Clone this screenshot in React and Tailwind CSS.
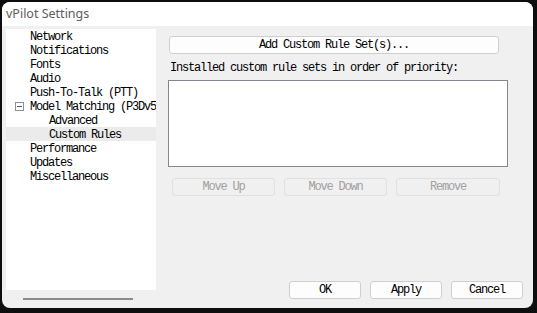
import React from "react";

const mono = { fontFamily: '"Liberation Mono", "DejaVu Sans Mono", monospace' };

const TreeRow = ({ label, depth = 0, selected, expander }) => (
  <div
    className={`h-[14px] flex items-center whitespace-nowrap ${selected ? "bg-[#ebebeb]" : ""}`}
  >
    <div className="w-[24px] flex justify-center shrink-0 pl-[2px]">
      {expander && (
        <div className="w-[9px] h-[9px] border border-[#919191] bg-white flex items-center justify-center">
          <div className="w-[5px] h-px bg-[#3b5f9a]" />
        </div>
      )}
    </div>
    <span className={`pt-px ${depth ? "ml-[19px]" : ""}`}>{label}</span>
  </div>
);

const Btn = ({ children, disabled, className = "" }) => (
  <div
    className={`h-[18px] rounded-[3px] border flex items-center justify-center ${
      disabled
        ? "border-[#e0e0e0] bg-[#f0f0f0] text-[#a0a0a0]"
        : "border-[#cfcfcf] bg-[#fdfdfd] text-black"
    } ${className}`}
  >
    {children}
  </div>
);

export default function App() {
  const items = [
    { label: "Network" },
    { label: "Notifications" },
    { label: "Fonts" },
    { label: "Audio" },
    { label: "Push-To-Talk (PTT)" },
    { label: "Model Matching (P3Dv5)", expander: true },
    { label: "Advanced", depth: 1 },
    { label: "Custom Rules", depth: 1, selected: true },
    { label: "Performance" },
    { label: "Updates" },
    { label: "Miscellaneous" },
  ];

  return (
    <div className="w-[537px] h-[313px] bg-[#0e0e0e] pt-[2px] pl-[2px] overflow-hidden">
      <div className="w-[531px] h-[306px] rounded-lg bg-[#f0f0f0] overflow-hidden flex flex-col">
        {/* Title bar */}
        <div
          className="h-[24px] bg-white flex items-center pl-[4px] text-[12.5px] text-[#5c5c5c]"
          style={{ fontFamily: '"Segoe UI", "Noto Sans", sans-serif' }}
        >
          vPilot Settings
        </div>

        {/* Body */}
        <div className="flex-1 flex pl-[4px] pt-[3px] text-[12px] tracking-[-1.2px]" style={mono}>
          {/* Tree */}
          <div className="w-[150px] flex flex-col">
            <div className="h-[261px] bg-white overflow-hidden text-black">
              {items.map((it) => (
                <TreeRow key={it.label} {...it} />
              ))}
            </div>
            <div className="mt-[8px] ml-[17px] w-[110px] h-[2px] bg-[#8a8a8a]" />
          </div>

          {/* Right panel */}
          <div className="flex-1 flex flex-col pl-[12px] pr-[10px]">
            <Btn className="mt-[7px] ml-[1px] w-[330px]">Add Custom Rule Set(s)...</Btn>
            <div className="mt-[7px] ml-[2px] h-[14px] flex items-center text-black">
              Installed custom rule sets in order of priority:
            </div>
            <div className="mt-[5px] w-[340px] h-[87px] bg-white border border-[#828790]" />
            <div className="mt-[11px] ml-[4px] flex gap-[9px]">
              <Btn disabled className="w-[103px]">Move Up</Btn>
              <Btn disabled className="w-[103px]">Move Down</Btn>
              <Btn disabled className="w-[104px]">Remove</Btn>
            </div>
            <div className="mt-auto mb-[9px] flex justify-end gap-[9px]">
              <Btn className="w-[72px]">OK</Btn>
              <Btn className="w-[72px]">Apply</Btn>
              <Btn className="w-[72px]">Cancel</Btn>
            </div>
          </div>
        </div>
      </div>
    </div>
  );
}
